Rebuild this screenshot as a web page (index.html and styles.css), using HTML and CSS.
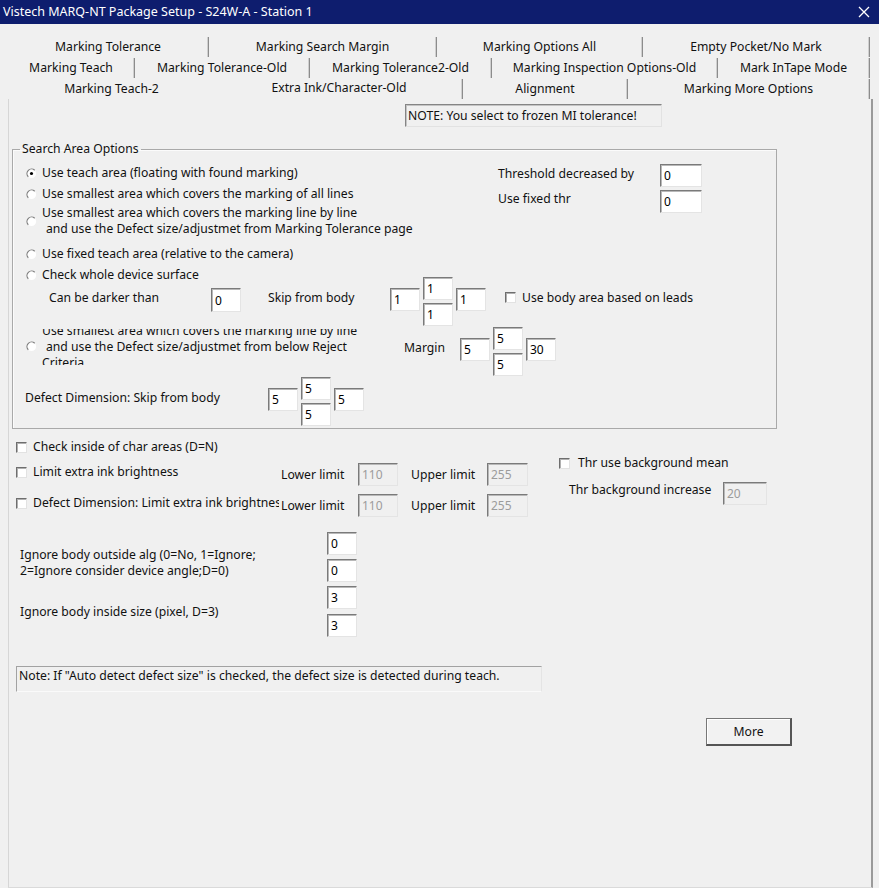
FILE: index.html
```html
<!DOCTYPE html>
<html>
<head>
<meta charset="utf-8">
<title>Vistech MARQ-NT Package Setup</title>
<link rel="stylesheet" href="styles.css">
</head>
<body>
<div class="window">
  <div class="titlebar">
    <span class="title">Vistech MARQ-NT Package Setup - S24W-A - Station 1</span>
    <svg class="close" width="12" height="12" viewBox="0 0 12 12"><path d="M1 1L11 11M11 1L1 11" stroke="#fff" stroke-width="1.3" fill="none"/></svg>
  </div>

  <div class="tabs">
    <div class="tabrow row1">
      <div class="tab">Marking Tolerance</div>
      <div class="tab">Marking Search Margin</div>
      <div class="tab">Marking Options All</div>
      <div class="tab">Empty Pocket/No Mark</div>
    </div>
    <div class="tabrow row2">
      <div class="tab">Marking Teach</div>
      <div class="tab">Marking Tolerance-Old</div>
      <div class="tab">Marking Tolerance2-Old</div>
      <div class="tab">Marking Inspection Options-Old</div>
      <div class="tab">Mark InTape Mode</div>
    </div>
    <div class="tabrow row3">
      <div class="tab noline">Marking Teach-2</div>
      <div class="tab active">Extra Ink/Character-Old</div>
      <div class="tab">Alignment</div>
      <div class="tab">Marking More Options</div>
    </div>
  </div>

  <div class="panel">
    <div class="note-top">NOTE: You select to frozen MI tolerance!</div>

    <fieldset class="group">
      <legend>Search Area Options</legend>

      <div class="top-area">
        <div class="options">
          <div class="opt">
            <svg class="rb" viewBox="0 0 12 12"><circle cx="6" cy="6" r="5" fill="#fff"/><path d="M9.5 2.5A4.95 4.95 0 0 0 2.5 9.5" stroke="#7a7a7a" stroke-width="1.3" fill="none"/><circle cx="6" cy="6" r="1.7" fill="#000"/></svg>
            <span>Use teach area (floating with found marking)</span>
          </div>
          <div class="opt">
            <svg class="rb" viewBox="0 0 12 12"><circle cx="6" cy="6" r="5" fill="#fff"/><path d="M9.5 2.5A4.95 4.95 0 0 0 2.5 9.5" stroke="#7a7a7a" stroke-width="1.3" fill="none"/></svg>
            <span>Use smallest area which covers the marking of all lines</span>
          </div>
          <div class="opt two">
            <svg class="rb" viewBox="0 0 12 12"><circle cx="6" cy="6" r="5" fill="#fff"/><path d="M9.5 2.5A4.95 4.95 0 0 0 2.5 9.5" stroke="#7a7a7a" stroke-width="1.3" fill="none"/></svg>
            <span class="lines"><span class="ln">Use smallest area which covers the marking line by line</span><span class="ln indent">and use the Defect size/adjustmet from Marking Tolerance page</span></span>
          </div>
          <div class="opt after-two">
            <svg class="rb" viewBox="0 0 12 12"><circle cx="6" cy="6" r="5" fill="#fff"/><path d="M9.5 2.5A4.95 4.95 0 0 0 2.5 9.5" stroke="#7a7a7a" stroke-width="1.3" fill="none"/></svg>
            <span>Use fixed teach area (relative to the camera)</span>
          </div>
          <div class="opt">
            <svg class="rb" viewBox="0 0 12 12"><circle cx="6" cy="6" r="5" fill="#fff"/><path d="M9.5 2.5A4.95 4.95 0 0 0 2.5 9.5" stroke="#7a7a7a" stroke-width="1.3" fill="none"/></svg>
            <span>Check whole device surface</span>
          </div>
        </div>
        <div class="thr">
          <span class="thr-l1">Threshold decreased by</span>
          <input class="in w42" type="text" value="0">
          <span class="thr-l2">Use fixed thr</span>
          <input class="in w42" type="text" value="0">
        </div>
      </div>

      <div class="darker-row">
        <span class="lbl w162 up">Can be darker than</span>
        <input class="in h24 up3" type="text" value="0">
        <span class="lbl skip up">Skip from body</span>
        <div class="cross">
          <input class="in l" type="text" value="1">
          <input class="in t" type="text" value="1">
          <input class="in b" type="text" value="1">
          <input class="in r" type="text" value="1">
        </div>
        <label class="chk leads"><span class="cb"></span><span>Use body area based on leads</span></label>
      </div>

      <div class="margin-row">
        <svg class="rb rb-mid" viewBox="0 0 12 12"><circle cx="6" cy="6" r="5" fill="#fff"/><path d="M9.5 2.5A4.95 4.95 0 0 0 2.5 9.5" stroke="#7a7a7a" stroke-width="1.3" fill="none"/></svg>
        <div class="clip">
          <span class="ln">Use smallest area which covers the marking line by line</span>
          <span class="ln indent">and use the Defect size/adjustmet from below Reject</span>
          <span class="ln">Criteria</span>
        </div>
        <span class="lbl margin-lbl">Margin</span>
        <div class="cross end">
          <input class="in l" type="text" value="5">
          <input class="in t" type="text" value="5">
          <input class="in b" type="text" value="5">
          <input class="in r" type="text" value="30">
        </div>
      </div>

      <div class="defect-row">
        <span class="lbl w243 up">Defect Dimension: Skip from body</span>
        <div class="cross">
          <input class="in l" type="text" value="5">
          <input class="in t" type="text" value="5">
          <input class="in b" type="text" value="5">
          <input class="in r" type="text" value="5">
        </div>
      </div>
    </fieldset>

    <div class="lower">
      <div class="lower-left">
        <label class="chk lrow-a"><span class="cb"></span><span>Check inside of char areas (D=N)</span></label>
        <div class="lrow">
          <label class="chk cklabel"><span class="cb"></span><span>Limit extra ink brightness</span></label>
          <span class="lim">Lower limit</span>
          <input class="in w40" type="text" value="110" disabled>
          <span class="lim up-lim">Upper limit</span>
          <input class="in w41" type="text" value="255" disabled>
        </div>
        <div class="lrow">
          <label class="chk cklabel"><span class="cb"></span><span>Defect Dimension: Limit extra ink brightness</span></label>
          <span class="lim">Lower limit</span>
          <input class="in w40" type="text" value="110" disabled>
          <span class="lim up-lim">Upper limit</span>
          <input class="in w41" type="text" value="255" disabled>
        </div>
      </div>
      <div class="lower-right">
        <label class="chk bg-mean"><span class="cb"></span><span>Thr use background mean</span></label>
        <div class="bg-inc">
          <span class="bg-lbl">Thr background increase</span>
          <input class="in w44" type="text" value="20" disabled>
        </div>
      </div>
    </div>

    <div class="ignore">
      <div class="ig-group">
        <span class="ig-label ig-end">Ignore body outside alg (0=No, 1=Ignore;<br>2=Ignore consider device angle;D=0)</span>
        <div class="ig-inputs">
          <input class="in" type="text" value="0">
          <input class="in" type="text" value="0">
        </div>
      </div>
      <div class="ig-group second">
        <span class="ig-label ig-mid">Ignore body inside size (pixel, D=3)</span>
        <div class="ig-inputs wide">
          <input class="in" type="text" value="3">
          <input class="in" type="text" value="3">
        </div>
      </div>
    </div>

    <div class="note-bottom">Note: If "Auto detect defect size" is checked, the defect size is detected during teach.</div>

    <button class="more" type="button">More</button>
  </div>
</div>
</body>
</html>
```

FILE: styles.css
```css
* { box-sizing: border-box; }
html, body { margin: 0; padding: 0; }
body {
  width: 879px;
  height: 888px;
  overflow: hidden;
  background: #f0f0f0;
  font-family: "Noto Sans", "Liberation Sans", sans-serif;
  font-size: 12.2px;
  line-height: 16px;
  color: #111;
}

/* title bar */
.titlebar {
  height: 24px;
  background: #0e1d6e;
  color: #fff;
  display: flex;
  align-items: center;
  justify-content: space-between;
  padding: 0 9px 0 3px;
}
.title { font-size: 12.5px; white-space: nowrap; }
.close { display: block; }

/* tabs */
.tabs { margin: 12px 0 0 8px; width: 862px; }
.tabrow { display: grid; height: 21px; padding-top: 1px; }
.row1 { grid-template-columns: 201px 228px 206px 227px; }
.row2 { grid-template-columns: 127px 175px 182px 226px 152px; }
.row3 { grid-template-columns: 208px 247px 165px 242px; }
.tab {
  display: flex;
  align-items: center;
  justify-content: center;
  white-space: nowrap;
  border-right: 1px solid #8c8c8c;
  box-shadow: inset -1px 0 0 #cfcfcf;
}
.tab.noline { border-right-color: transparent; box-shadow: none; }
.tab.active { padding-bottom: 3px; }

/* panel */
.panel {
  margin-left: 8px;
  width: 865px;
  height: 789px;
  border-left: 1px solid #d6d6d6;
  border-right: 2px solid #9a9a9a;
  border-bottom: 1px solid #dadada;
  padding-top: 1px;
}

.note-top {
  margin: 4px 0 0 396px;
  width: 257px;
  height: 23px;
  border-top: 1px solid #858585;
  border-left: 1px solid #858585;
  border-right: 1px solid #e2e2e2;
  border-bottom: 1px solid #e2e2e2;
  box-shadow: inset 1px 1px 0 #c4c4c4;
  padding-left: 2px;
  line-height: 21px;
  white-space: nowrap;
}

/* inputs */
.in {
  display: block;
  width: 30px;
  height: 23px;
  margin: 0;
  padding: 0 0 0 3px;
  background: #fff;
  border-top: 1px solid #7a7a7a;
  border-left: 1px solid #7a7a7a;
  border-right: 1px solid #e4e4e4;
  border-bottom: 1px solid #e4e4e4;
  box-shadow: inset 1px 1px 0 #b8b8b8;
  font-family: inherit;
  font-size: 12px;
  color: #000;
  outline: none;
}
.in:disabled { background: #f0f0f0; color: #9c9c9c; }
.w40 { width: 40px; }
.w41 { width: 41px; }
.w42 { width: 42px; }
.w44 { width: 44px; }
.h24 { height: 24px; }

.cb {
  display: block;
  flex: none;
  width: 11px;
  height: 11px;
  background: #fff;
  border-top: 1px solid #6e6e6e;
  border-left: 1px solid #6e6e6e;
  border-right: 1px solid #e2e2e2;
  border-bottom: 1px solid #e2e2e2;
  box-shadow: inset 1px 1px 0 #b0b0b0;
  margin-right: 6px;
}
.chk { display: flex; align-items: center; white-space: nowrap; }

.rb { display: block; flex: none; width: 11px; height: 11px; margin-right: 5px; }

/* group box */
.group {
  margin: 14px 0 0 3px;
  width: 765px;
  min-width: 0;
  border: 1px solid #a9a9a9;
  box-shadow: inset 1px 1px 0 #fbfbfb;
  padding: 0 0 2px 0;
}
.group legend {
  margin-left: 7px;
  padding: 0 2px;
  line-height: 16px;
}

.top-area { display: flex; margin-top: 7px; padding-left: 13px; }
.options { width: 472px; padding-top: 1px; }
.opt { display: flex; align-items: center; height: 16px; white-space: nowrap; }
.opt + .opt { margin-top: 5px; }
.opt.two { margin-top: 3px; height: 32px; }
.opt.after-two { margin-top: 9px; }
.lines { display: flex; flex-direction: column; }
.ln { display: block; white-space: nowrap; flex: none; }
.indent { padding-left: 4px; }

.thr {
  display: grid;
  grid-template-columns: 162px 42px;
  grid-auto-rows: 23px;
  row-gap: 3px;
  white-space: nowrap;
}
.thr-l1 { margin-top: 2px; }
.thr-l2 { margin-top: 1px; }

.lbl { white-space: nowrap; flex: none; }
.up { margin-bottom: 7px; }
.up3 { margin-bottom: 3px; }
.w162 { width: 162px; }
.w243 { width: 243px; }
.skip { width: 122px; margin-left: 27px; }

.darker-row {
  display: flex;
  align-items: center;
  height: 49px;
  margin-top: -6px;
  padding-left: 36px;
}
.leads { margin-left: 19px; margin-bottom: 8px; }

.cross {
  display: grid;
  grid-template-columns: 30px 30px 30px;
  grid-template-rows: 23px 23px;
  column-gap: 3px;
  row-gap: 3px;
  height: 49px;
  flex: none;
}
.cross .l { grid-column: 1; grid-row: 1 / 3; align-self: center; margin-bottom: 4px; }
.cross .t { grid-column: 2; grid-row: 1; }
.cross .b { grid-column: 2; grid-row: 2; }
.cross .r { grid-column: 3; grid-row: 1 / 3; align-self: center; margin-bottom: 4px; }
.cross.end { align-self: flex-end; }

.margin-row {
  display: flex;
  height: 51px;
  margin-top: -1px;
  padding-left: 13px;
}
.rb-mid { align-self: flex-start; margin-top: 16px; }
.clip {
  width: 362px;
  height: 36px;
  margin-top: 4px;
  align-self: flex-start;
  overflow: hidden;
  display: flex;
  flex-direction: column;
  justify-content: center;
  flex: none;
}
.margin-lbl { width: 56px; align-self: center; margin-bottom: 5px; }

.defect-row {
  display: flex;
  align-items: center;
  height: 49px;
  margin-top: 1px;
  padding-left: 12px;
}

/* lower area */
.lower { display: flex; margin-top: 10px; padding-left: 7px; }
.lower-left { width: 512px; flex: none; }
.lrow-a { height: 16px; }
.lrow { display: flex; align-items: center; height: 23px; margin-top: 8px; }
.cklabel {
  width: 263px;
  margin-right: 2px;
  height: 16px;
  align-self: flex-start;
  margin-top: 1px;
  overflow: hidden;
  flex: none;
}
.lim { width: 77px; white-space: nowrap; flex: none; }
.up-lim { width: 76px; margin-left: 13px; }

.lower-right { margin-left: 31px; margin-top: 16px; }
.bg-mean { height: 16px; }
.bg-mean .cb { margin-right: 8px; }
.bg-inc { display: flex; margin-top: 11px; }
.bg-lbl { width: 154px; margin-left: 10px; white-space: nowrap; }

/* ignore body */
.ignore { margin-top: 15px; padding-left: 11px; }
.ig-group { display: flex; }
.ig-group.second { margin-top: 4px; }
.ig-label { width: 307px; flex: none; white-space: nowrap; }
.ig-end { align-self: flex-end; margin-bottom: 3px; line-height: 16px; }
.ig-mid { align-self: center; }
.ig-inputs { display: flex; flex-direction: column; gap: 4px; }
.ig-inputs.wide { gap: 5px; }

.note-bottom {
  margin: 29px 0 0 7px;
  width: 526px;
  height: 26px;
  border-top: 1px solid #a2a2a2;
  border-left: 1px solid #a2a2a2;
  border-right: 1px solid #e4e4e4;
  border-bottom: 1px solid #fafafa;
  padding: 1px 0 0 2px;
  white-space: nowrap;
}

.more {
  display: block;
  margin: 26px 0 0 697px;
  width: 86px;
  height: 28px;
  padding: 0;
  background: #f2f2f2;
  border-top: 1px solid #777;
  border-left: 1px solid #777;
  border-right: 2px solid #555;
  border-bottom: 2px solid #555;
  box-shadow: inset 1px 1px 0 #fff;
  font-family: inherit;
  font-size: 12.2px;
  color: #111;
}
```
